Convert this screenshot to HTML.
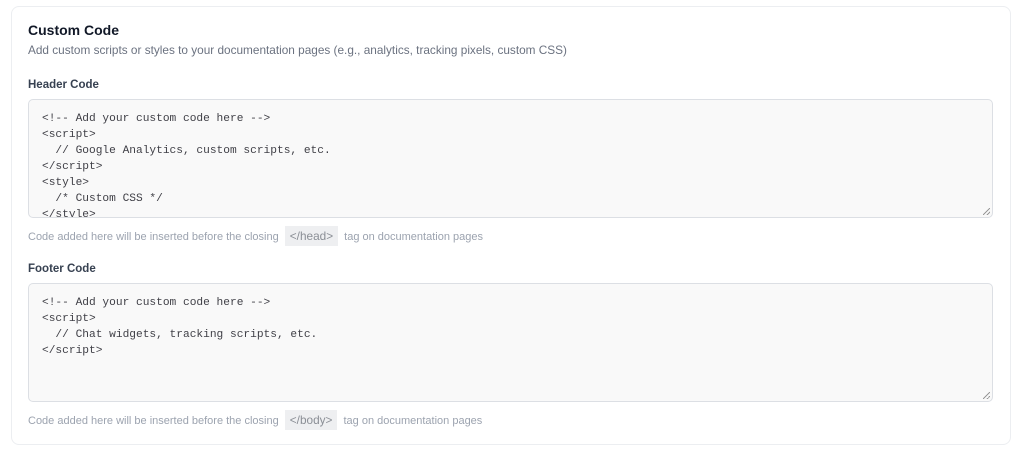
<!DOCTYPE html>
<html><head><style>
html,body{margin:0;padding:0;background:#fff;width:1024px;height:462px;overflow:hidden}
body{font-family:"Liberation Sans",sans-serif;}
.card{position:absolute;left:11px;top:6px;width:1000px;height:439px;border:1px solid #eceef1;border-radius:8px;box-sizing:border-box}
.abs{position:absolute;white-space:nowrap}
.title{left:28px;top:22px;font-size:14px;font-weight:bold;color:#111827}
.sub{left:28px;top:43px;font-size:11.8px;color:#6b7280}
.lbl{left:28px;font-size:11.5px;font-weight:bold;color:#374151}
.ta{position:absolute;left:28px;width:965px;height:119px;box-sizing:border-box;border:1px solid #dcdfe4;border-radius:5px;background:#f9f9f9;overflow:hidden}
.ta pre{margin:0;position:absolute;left:13px;top:11px;font-family:"Liberation Mono",monospace;font-size:11.2px;line-height:16px;color:#3f3f46}
.grip{position:absolute;right:2px;bottom:2px;width:7px;height:7px;background:linear-gradient(135deg,transparent 45%,#999 45%,#999 55%,transparent 55%,transparent 75%,#999 75%,#999 85%,transparent 85%)}
.hint{left:28px;font-size:11px;color:#9ca3af}
.hint code{background:#eeeff1;color:#8b8f96;font-family:"Liberation Sans",sans-serif;font-size:11.8px;padding:3px 5px;margin:0 3px}
</style></head><body>
<div class="card"></div>
<div class="abs title">Custom Code</div>
<div class="abs sub">Add custom scripts or styles to your documentation pages (e.g., analytics, tracking pixels, custom CSS)</div>
<div class="abs lbl" style="top:79px">Header Code</div>
<div class="ta" style="top:99px"><pre>&lt;!-- Add your custom code here --&gt;
&lt;script&gt;
  // Google Analytics, custom scripts, etc.
&lt;/script&gt;
&lt;style&gt;
  /* Custom CSS */
&lt;/style&gt;</pre><div class="grip"></div></div>
<div class="abs hint" style="top:229px">Code added here will be inserted before the closing <code>&lt;/head&gt;</code> tag on documentation pages</div>
<div class="abs lbl" style="top:263px">Footer Code</div>
<div class="ta" style="top:283px"><pre>&lt;!-- Add your custom code here --&gt;
&lt;script&gt;
  // Chat widgets, tracking scripts, etc.
&lt;/script&gt;</pre><div class="grip"></div></div>
<div class="abs hint" style="top:413px">Code added here will be inserted before the closing <code>&lt;/body&gt;</code> tag on documentation pages</div>
</body></html>
